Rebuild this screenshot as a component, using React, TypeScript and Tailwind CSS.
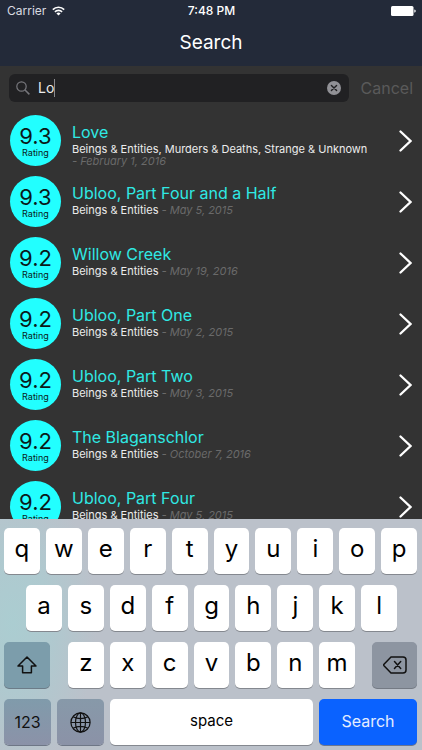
import { useState } from "react";

type Story = {
  rating: string;
  title: string;
  tags: string;
  date: string;
};

const stories: Story[] = [
  { rating: "9.3", title: "Love", tags: "Beings & Entities, Murders & Deaths, Strange & Unknown", date: "February 1, 2016" },
  { rating: "9.3", title: "Ubloo, Part Four and a Half", tags: "Beings & Entities", date: "May 5, 2015" },
  { rating: "9.2", title: "Willow Creek", tags: "Beings & Entities", date: "May 19, 2016" },
  { rating: "9.2", title: "Ubloo, Part One", tags: "Beings & Entities", date: "May 2, 2015" },
  { rating: "9.2", title: "Ubloo, Part Two", tags: "Beings & Entities", date: "May 3, 2015" },
  { rating: "9.2", title: "The Blaganschlor", tags: "Beings & Entities", date: "October 7, 2016" },
  { rating: "9.2", title: "Ubloo, Part Four", tags: "Beings & Entities", date: "May 5, 2015" },
];

function StatusBar() {
  return (
    <div className="grid h-[22px] grid-cols-3 items-center pl-[7px] pr-[6px] text-xs text-[#d9dbe0]">
      <div className="flex items-center gap-[6px]">
        <span>Carrier</span>
        <svg width="13" height="10" viewBox="0 0 13 10" fill="none" stroke="#fff" strokeWidth="1.6" aria-hidden="true">
          <path d="M0.8 3.6a8.1 8.1 0 0 1 11.4 0" />
          <path d="M2.9 5.9a5.1 5.1 0 0 1 7.2 0" />
          <path d="M6.5 9.6 4.4 7.5a3 3 0 0 1 4.2 0z" fill="#fff" stroke="none" />
        </svg>
      </div>
      <span className="text-center font-medium text-white">7:48 PM</span>
      <svg className="justify-self-end" width="25" height="10" viewBox="0 0 25 10" fill="#fff" aria-hidden="true">
        <rect x="0" y="0" width="22.5" height="10" rx="1.5" />
        <path d="M23.3 3.4c1 .2 1.4.8 1.4 1.6s-.4 1.4-1.4 1.6z" />
      </svg>
    </div>
  );
}

function SearchBar() {
  const [query, setQuery] = useState("Lo");
  return (
    <div className="flex h-11 shrink-0 items-center bg-[#333333] px-[9px]">
      <div className="flex h-7 min-w-0 flex-1 items-center rounded-md bg-[#212123] pl-[7px] pr-2">
        <svg width="14" height="14" viewBox="0 0 14 14" fill="none" stroke="#77777c" strokeWidth="1.2" aria-hidden="true">
          <circle cx="5.5" cy="5.5" r="4.7" />
          <path d="m9 9 4.4 4.4" strokeWidth="1.5" />
        </svg>
        <div className="ml-2 flex min-w-0 flex-1 items-center">
          <input
            aria-label="Search stories"
            className="field-sizing-content bg-transparent text-sm text-[#ececec] caret-transparent outline-none"
            value={query}
            onChange={(e) => setQuery(e.target.value)}
          />
          <span className="h-[18px] w-px bg-[#8a8a8e]" />
        </div>
        <button aria-label="Clear text" onClick={() => setQuery("")}>
          <svg width="14" height="14" viewBox="0 0 14 14" aria-hidden="true">
            <circle cx="7" cy="7" r="7" fill="#919196" />
            <path d="m4.4 4.4 5.2 5.2m0-5.2L4.4 9.6" stroke="#212123" strokeWidth="1.4" strokeLinecap="round" />
          </svg>
        </button>
      </div>
      <button className="pl-3 text-base text-[#5a5a5a]">Cancel</button>
    </div>
  );
}

function StoryRow({ story }: { story: Story }) {
  return (
    <li className="flex h-[61px] items-center px-[10px]">
      <div className="flex size-[51px] shrink-0 flex-col items-center rounded-full bg-[#22ffff] pt-[10px] text-[#0a1a1a]">
        <span className="text-[22px] leading-[22px]">{story.rating}</span>
        <span className="text-[9px] leading-3">Rating</span>
      </div>
      <div className="ml-[11px] h-[37px] min-w-0 flex-1">
        <h2 className="text-base leading-[21px] text-[#2fe9e4]">{story.title}</h2>
        <p className="text-[11px] leading-3 text-[#ececec]">
          {story.tags} <em className="inline-block text-[#6a6a6a]">- {story.date}</em>
        </p>
      </div>
      <button aria-label={"Open " + story.title} className="ml-4">
        <svg width="13" height="22" viewBox="0 0 13 22" fill="none" stroke="#fff" strokeWidth="2.3" strokeLinecap="round" aria-hidden="true">
          <path d="m1.5 1.5 10 9.5-10 9.5" />
        </svg>
      </button>
    </li>
  );
}

function LetterKey({ letter }: { letter: string }) {
  return (
    <button className="h-[46px] min-w-0 flex-1 rounded-[5px] bg-white pb-1 text-2xl text-black shadow-[0_1px_0_#84888f]">
      {letter}
    </button>
  );
}

function Letters({ letters }: { letters: string }) {
  return (
    <div className="flex min-w-0 flex-1 gap-[6px]">
      {letters.split("").map((l) => (
        <LetterKey key={l} letter={l} />
      ))}
    </div>
  );
}

function Keyboard() {
  return (
    <div className="flex shrink-0 flex-col gap-[11px] bg-[#bbc1ca] bg-[radial-gradient(ellipse_20%_65%_at_3%_45%,#abcdd1_0%,#afc9cf_45%,#bbc1ca_100%)] pb-[5px] pl-1 pr-[5px] pt-[9px]">
      <Letters letters="qwertyuiop" />
      <div className="flex pl-[22px] pr-5">
        <Letters letters="asdfghjkl" />
      </div>
      <div className="flex">
        <button aria-label="Shift" className="mr-[18px] flex h-[46px] w-[46px] items-center justify-center rounded-[5px] bg-[#7c9dab] shadow-[0_1px_0_#6c7c88]">
          <svg width="20" height="18" viewBox="0 0 20 18" fill="none" stroke="#111" strokeWidth="1.5" strokeLinejoin="round" aria-hidden="true">
            <path d="M10 1 1 10h4.6v6.8h8.8V10H19z" />
          </svg>
        </button>
        <Letters letters="zxcvbnm" />
        <button aria-label="Delete" className="ml-[17px] flex h-[46px] w-[45px] items-center justify-center rounded-[5px] bg-[#8d95a1] shadow-[0_1px_0_#747a84]">
          <svg width="24" height="18" viewBox="0 0 24 18" fill="none" stroke="#111" strokeWidth="1.5" strokeLinejoin="round" strokeLinecap="round" aria-hidden="true">
            <path d="M8 1h12a3 3 0 0 1 3 3v10a3 3 0 0 1-3 3H8L1 9.8q-.7-.8 0-1.6z" />
            <path d="m11.5 5.6 6.2 6.8m0-6.8-6.2 6.8" />
          </svg>
        </button>
      </div>
      <div className="flex gap-[6px] text-[15px]">
        <button className="h-[46px] w-[47px] rounded-[5px] bg-linear-to-b from-[#809bab] to-[#8b92a8] text-base text-[#111] shadow-[0_1px_0_#6e7686]">
          123
        </button>
        <button aria-label="Next keyboard" className="flex h-[46px] w-[47px] items-center justify-center rounded-[5px] bg-linear-to-b from-[#8799a9] to-[#8b92a7] shadow-[0_1px_0_#6e7686]">
          <svg width="21" height="21" viewBox="0 0 21 21" fill="none" stroke="#111" strokeWidth="1.2" aria-hidden="true">
            <circle cx="10.5" cy="10.5" r="9.6" />
            <ellipse cx="10.5" cy="10.5" rx="5" ry="9.6" />
            <path d="M10.5 1v19M1 10.5h19M3 4.8c4.5 2.2 10.5 2.2 15 0M3 16.2c4.5-2.2 10.5-2.2 15 0" />
          </svg>
        </button>
        <button className="h-[46px] min-w-0 flex-1 rounded-[5px] bg-white pb-[2px] text-black shadow-[0_1px_0_#84888f]">space</button>
        <button className="h-[46px] w-[98px] rounded-[5px] bg-[#0a62ff] pb-[2px] text-base text-[#e4edff] shadow-[0_1px_0_#6a7690]">Search</button>
      </div>
    </div>
  );
}

export default function App() {
  return (
    <div className="flex h-screen flex-col overflow-hidden bg-[#333333] font-['Inter',sans-serif]">
      <header className="h-[66px] shrink-0 bg-[#232a39]">
        <StatusBar />
        <h1 className="text-center text-[19px] leading-[42px] text-white">Search</h1>
      </header>
      <SearchBar />
      <ul className="min-h-0 flex-1 overflow-hidden">
        {stories.map((s) => (
          <StoryRow key={s.title} story={s} />
        ))}
      </ul>
      <Keyboard />
    </div>
  );
}
